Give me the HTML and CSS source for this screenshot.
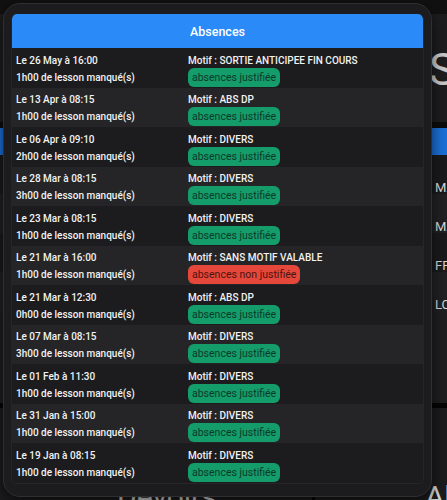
FILE: index.html
```html
<!DOCTYPE html>
<html lang="fr">
<head>
<meta charset="utf-8">
<title>Absences</title>
<link rel="stylesheet" href="styles.css">
</head>
<body>
<div class="page">
  <div class="topbar"></div>
  <div class="hero"><span class="hero-title">S</span></div>
  <div class="sep"></div>
  <div class="bluebar"></div>
  <div class="bg-rows">
    <div class="bg-row">MA</div>
    <div class="bg-row alt">MA</div>
    <div class="bg-row">FF</div>
    <div class="bg-row alt">LC</div>
    <div class="bg-fill"></div>
  </div>
  <div class="sep2"></div>
  <div class="bottom">
    <div class="bottom-left"><span class="bottom-title">Devoirs</span></div>
    <div class="bottom-divider"></div>
    <div class="bottom-right"><span class="bottom-title">Ab</span></div>
  </div>
</div>

<div class="dialog">
  <div class="table">
    <div class="table-head">Absences</div>
    <div class="row">
      <div class="c1">Le 26 May à 16:00</div><div class="c2">Motif : SORTIE ANTICIPEE FIN COURS</div>
      <div class="c3">1h00 de lesson manqué(s)</div><div class="c4"><span class="badge ok">absences justifiée</span></div>
    </div>
    <div class="row alt">
      <div class="c1">Le 13 Apr à 08:15</div><div class="c2">Motif : ABS DP</div>
      <div class="c3">1h00 de lesson manqué(s)</div><div class="c4"><span class="badge ok">absences justifiée</span></div>
    </div>
    <div class="row">
      <div class="c1">Le 06 Apr à 09:10</div><div class="c2">Motif : DIVERS</div>
      <div class="c3">2h00 de lesson manqué(s)</div><div class="c4"><span class="badge ok">absences justifiée</span></div>
    </div>
    <div class="row alt">
      <div class="c1">Le 28 Mar à 08:15</div><div class="c2">Motif : DIVERS</div>
      <div class="c3">3h00 de lesson manqué(s)</div><div class="c4"><span class="badge ok">absences justifiée</span></div>
    </div>
    <div class="row">
      <div class="c1">Le 23 Mar à 08:15</div><div class="c2">Motif : DIVERS</div>
      <div class="c3">1h00 de lesson manqué(s)</div><div class="c4"><span class="badge ok">absences justifiée</span></div>
    </div>
    <div class="row alt">
      <div class="c1">Le 21 Mar à 16:00</div><div class="c2">Motif : SANS MOTIF VALABLE</div>
      <div class="c3">1h00 de lesson manqué(s)</div><div class="c4"><span class="badge ko">absences non justifiée</span></div>
    </div>
    <div class="row">
      <div class="c1">Le 21 Mar à 12:30</div><div class="c2">Motif : ABS DP</div>
      <div class="c3">0h00 de lesson manqué(s)</div><div class="c4"><span class="badge ok">absences justifiée</span></div>
    </div>
    <div class="row alt">
      <div class="c1">Le 07 Mar à 08:15</div><div class="c2">Motif : DIVERS</div>
      <div class="c3">3h00 de lesson manqué(s)</div><div class="c4"><span class="badge ok">absences justifiée</span></div>
    </div>
    <div class="row">
      <div class="c1">Le 01 Feb à 11:30</div><div class="c2">Motif : DIVERS</div>
      <div class="c3">1h00 de lesson manqué(s)</div><div class="c4"><span class="badge ok">absences justifiée</span></div>
    </div>
    <div class="row alt">
      <div class="c1">Le 31 Jan à 15:00</div><div class="c2">Motif : DIVERS</div>
      <div class="c3">1h00 de lesson manqué(s)</div><div class="c4"><span class="badge ok">absences justifiée</span></div>
    </div>
    <div class="row">
      <div class="c1">Le 19 Jan à 08:15</div><div class="c2">Motif : DIVERS</div>
      <div class="c3">1h00 de lesson manqué(s)</div><div class="c4"><span class="badge ok">absences justifiée</span></div>
    </div>
  </div>
</div>
</body>
</html>
```

FILE: styles.css
```css
html, body {
  margin: 0;
  padding: 0;
}
body {
  width: 447px;
  height: 500px;
  overflow: hidden;
  background: #161618;
  font-family: Roboto, "Liberation Sans", sans-serif;
  position: relative;
}

/* background page behind the dialog */
.page {
  display: flex;
  flex-direction: column;
  height: 500px;
  overflow: hidden;
}
.topbar {
  height: 14px;
  flex-shrink: 0;
  background: #111112;
}
.hero {
  height: 108px;
  flex-shrink: 0;
  box-sizing: border-box;
  background: #1d1d1f;
  display: flex;
  align-items: center;
  padding-left: 429px;
  overflow: hidden;
}
.hero-title {
  font-size: 45px;
  color: #c8c8c8;
  line-height: 1;
  margin-top: 2px;
}
.sep {
  height: 6px;
  flex-shrink: 0;
  background: #0c0c0d;
}
.bluebar {
  height: 27px;
  flex-shrink: 0;
  background: #1b6fd5;
}
.bg-rows {
  display: flex;
  flex-direction: column;
  height: 248px;
  flex-shrink: 0;
  background: #1e1e20;
}
.bg-row {
  height: 39px;
  flex-shrink: 0;
  box-sizing: border-box;
  padding-left: 435px;
  padding-top: 26px;
  line-height: 13px;
  font-size: 13px;
  color: #d8d8d8;
  background: #1a1a1c;
  white-space: nowrap;
  overflow: hidden;
}
.bg-row.alt {
  background: #212123;
}
.bg-fill {
  flex: 1;
}
.sep2 {
  height: 5px;
  flex-shrink: 0;
  background: #050505;
}
.bottom {
  flex: 1;
  display: flex;
  background: #1b1b1d;
  overflow: hidden;
}
.bottom-left {
  width: 312px;
  flex-shrink: 0;
  display: flex;
  align-items: flex-end;
  padding-left: 117px;
  box-sizing: border-box;
  overflow: hidden;
}
.bottom-divider {
  width: 3px;
  flex-shrink: 0;
  background: #050505;
}
.bottom-right {
  flex: 1;
  min-width: 0;
  display: flex;
  align-items: flex-end;
  padding-left: 110px;
  overflow: hidden;
}
.bottom-title {
  font-size: 30px;
  color: #d0d0d0;
  line-height: 1;
  margin-bottom: -12px;
  white-space: nowrap;
}

/* dialog overlay */
.dialog {
  position: absolute;
  left: 3px;
  top: 3px;
  width: 429px;
  height: 494px;
  box-sizing: border-box;
  background: #1c1b1d;
  border: 1px solid #2f2f31;
  border-radius: 17px;
  padding: 10px 7px 0 7px;
  box-shadow: 0 4px 14px rgba(0, 0, 0, 0.6);
}
.table {
  width: 413px;
  border: 1px solid #262628;
  border-top: none;
  border-radius: 5px;
  overflow: hidden;
  box-sizing: border-box;
}
.table-head {
  height: 34px;
  background: #2a8af8;
  color: #ffffff;
  font-size: 12.5px;
  font-weight: 500;
  display: flex;
  align-items: center;
  justify-content: center;
  border-radius: 5px 5px 0 0;
}
.row {
  display: grid;
  grid-template-columns: 172px 1fr;
  grid-template-rows: 14px 20px;
  padding: 5px 0 0.5px 0;
  height: 39.5px;
  box-sizing: border-box;
  background: #1c1c1e;
  color: #f2f2f2;
  font-size: 10px;
  font-weight: 500;
  white-space: nowrap;
}
.row.alt {
  background: #252527;
}
.c1, .c2, .c3, .c4 {
  padding-left: 4px;
  display: flex;
  align-items: center;
}
.badge {
  display: inline-flex;
  align-items: center;
  height: 19px;
  padding: 0 4px;
  border-radius: 6px;
  font-size: 10.5px;
  font-weight: 400;
}
.badge.ok {
  background: #159c6b;
  color: #0c3a29;
}
.badge.ko {
  background: #e5483a;
  color: #4d1310;
}
```
